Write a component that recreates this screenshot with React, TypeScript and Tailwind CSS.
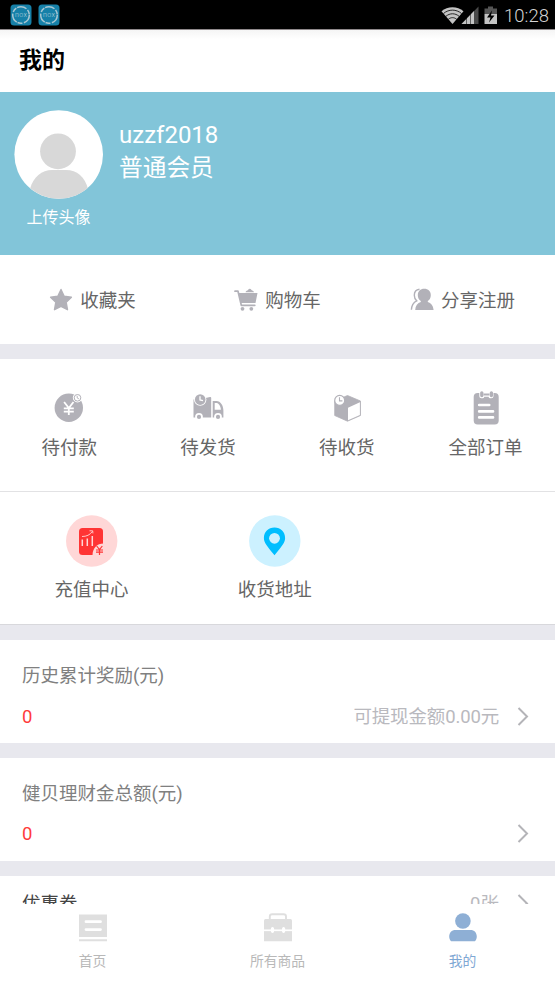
import type { ReactNode } from "react";
import clsx from "clsx";

function NoxIcon() {
    return (
        <svg width="22" height="22" viewBox="0 0 22 22">
            <rect x="0.5" y="0.5" width="21" height="21" rx="3.5" fill="#1680a8" />
            <circle cx="11" cy="11" r="8.3" fill="none" stroke="#a9c6d2" strokeWidth="1.5" strokeDasharray="10 1.5 5 0.9" />
            <text x="11" y="13.2" textAnchor="middle" fontSize="7" fontWeight="300" fill="#b9d3dd" textLength="12">
                nox
            </text>
        </svg>
    );
}

function StatusBar() {
    return (
        <div className="flex h-[29px] shrink-0 items-center bg-black pl-[10px] pr-[6px]">
            <div className="flex gap-[6px] pt-[1px]">
                <NoxIcon />
                <NoxIcon />
            </div>
            <div className="ml-auto flex items-center">
                <svg width="60" height="20" viewBox="0 0 60 20">
                    <path d="M11.5 19L0.5 6.3C6.5 .8 16.5 .8 22.5 6.3Z" fill="#c4c4c4" />
                    <path d="M2.500 8.500c5.200-4.500 12.800-4.500 18 0M4.800 11.400c4-3.500 9.400-3.500 13.400 0M7.300 14.300c2.600-2.200 5.800-2.200 8.400 0" fill="none" stroke="#000" strokeWidth=".8" />
                    <path d="M37.500 1.500V19H20.500Z" fill="#4a4a4a" />
                    <path d="M33 6V19H20.500Z" fill="#c4c4c4" />
                    <path d="M25.500 12v7M29.500 9v10" stroke="#000" strokeWidth=".5" />
                    <path d="M47 1.500h5v2h4V9H43.500V3.500H47z" fill="#555" />
                    <path d="M43.500 9H56v10H43.500z" fill="#c4c4c4" />
                    <path d="M51 5.500l-5 7h3.500l-1.500 5 5.500-7H50z" fill="#000" />
                </svg>
                <span className="ml-[3px] pt-[3px] text-[18.500px] font-light leading-[26px] text-[#d4d4d4]">10:28</span>
            </div>
        </div>
    );
}

function Avatar() {
    return (
        <svg width="89" height="89" viewBox="0 0 89 89">
            <defs>
                <clipPath id="avatar">
                    <circle cx="44.9" cy="44.500" r="44.300" />
                </clipPath>
            </defs>
            <circle cx="44.700" cy="44.500" r="44.300" fill="#fff" />
            <g clipPath="url(#avatar)" fill="#d8d8d8">
                <circle cx="44" cy="41.300" r="17.900" />
                <path d="M16 89V79C19 67 28 60 38 60H52C63 60 71 67 74 79V89z" />
            </g>
        </svg>
    );
}

function StarIcon() {
    return (
        <svg width="24" height="24" viewBox="0 0 24 24">
            <path d="M12 1.500l3.200 6.700 7.200 1-5.200 5.100 1.300 7.400-6.500-3.400-6.500 3.400 1.300-7.400-5.200-5.100 7.200-1z" fill="#b2b1b8" stroke="#b2b1b8" strokeWidth="1.400" strokeLinejoin="round" />
        </svg>
    );
}

function CartIcon() {
    return (
        <svg width="24" height="24" viewBox="0 0 24 24">
            <g fill="#b2b1b8">
                <path d="M4.500 5H23.500L21.500 15H7zM11.500 4.200c.5-1.500 1.800-1.500 2.500-2.200 1-1.600 2.500-1.600 3.500 0 .8.700 2 .7 2.500 2.200z" />
                <circle cx="8.500" cy="20.800" r="1.900" />
                <circle cx="17.300" cy="20.800" r="1.900" />
            </g>
            <path d="M1 3.200h3L7.300 17.300H20.800" fill="none" stroke="#b2b1b8" strokeWidth="1.700" strokeLinecap="round" strokeLinejoin="round" />
        </svg>
    );
}

function ShareIcon() {
    return (
        <svg width="24" height="24" viewBox="0 0 24 24">
            <path d="M14.200 .8c4 0 6.600 2.700 6.600 6.400 0 2.600-1.200 4.700-3 5.900v.9c3.200 1 5.500 3.800 5.800 8H5.200c.2-4.200 2.400-7 5.600-8v-.9c-1.800-1.200-3-3.300-3-5.900 0-3.700 2.600-6.400 6.400-6.400z" fill="#b2b1b8" />
            <path d="M9.500 1.300C6.200 1.700 4.300 4.200 4.300 7.200c0 2.400 1 4.300 2.400 5.600C3.600 14.300 1.600 17.500 1.400 21.800" fill="none" stroke="#b2b1b8" strokeWidth="1.400" />
        </svg>
    );
}

function PayIcon() {
    return (
        <svg width="32" height="32" viewBox="0 0 32 32">
            <circle cx="15.800" cy="15.800" r="14.200" fill="#b2b1b8" />
            <path d="M11.100 10l4.700 6 4.700-6M15.800 16v7M10.800 16.400h10M10.800 19.600h10" fill="none" stroke="#fff" strokeWidth="1.800" />
            <circle cx="24.500" cy="5.800" r="4.700" fill="#fff" />
            <circle cx="24.500" cy="5.800" r="3.300" fill="#fff" stroke="#b2b1b8" strokeWidth="1" />
            <path d="M24.200 3.800v2.200l1.700.8" fill="none" stroke="#b2b1b8" strokeWidth=".9" />
        </svg>
    );
}

function TruckIcon() {
    return (
        <svg width="32" height="32" viewBox="0 0 32 32">
            <path d="M1.500 7.500H7L18 5c.8 0 1.200.4 1.200 1V25.500H1.500zM20.700 9h3.800c4 0 6.900 4.500 6.900 9.500v7H20.700z" fill="#b2b1b8" />
            <path d="M22.700 11h2c2.300.4 4 3.500 4.200 6.800h-6.200z" fill="#fff" />
            <circle cx="7" cy="25" r="3.900" fill="#fff" />
            <circle cx="26" cy="25" r="3.900" fill="#fff" />
            <circle cx="7" cy="24.900" r="2.100" fill="#b2b1b8" />
            <circle cx="26" cy="24.900" r="2.100" fill="#b2b1b8" />
            <circle cx="8.200" cy="7.600" r="6.200" fill="#fff" />
            <circle cx="8.200" cy="7.600" r="5.300" fill="#b2b1b8" />
            <path d="M8 4.200V8l3 .6" fill="none" stroke="#fff" strokeWidth="1.300" />
        </svg>
    );
}

function BoxIcon() {
    return (
        <svg width="32" height="32" viewBox="0 0 32 32">
            <path d="M16.500 3.500L29.500 9V23.500L16.500 29.200 3.700 23.500V9z" fill="#b2b1b8" stroke="#b2b1b8" strokeWidth=".8" strokeLinejoin="round" />
            <path d="M17 15.700l11.900-5.500V23L17 28.300z" fill="#fff" />
            <circle cx="8.700" cy="8.400" r="5" fill="#fff" stroke="#b2b1b8" strokeWidth="1.200" />
            <path d="M8.500 5.300V8.900h2.900" fill="none" stroke="#b2b1b8" strokeWidth="1.100" />
        </svg>
    );
}

function OrdersIcon() {
    return (
        <svg width="32" height="36" viewBox="0 0 32 36">
            <rect x="3.700" y="3" width="25" height="31.500" rx="4" fill="#b2b1b8" />
            <path d="M9.300 1v5.200q0 2 2.200 2h1q1.500 0 1.800-1.500h4.200q.3 1.500 1.800 1.500h1q2.200 0 2.200-2V1z" fill="#fff" />
            <path d="M11.800 2.800V5.600M21.400 2.800V5.600" stroke="#b2b1b8" strokeWidth="3.300" strokeLinecap="round" />
            <path d="M13.500 4.500h6" stroke="#b2b1b8" strokeWidth="2" />
            <path d="M9.200 15h10M9.200 21.400H23M9.200 27.400H23" stroke="#fff" strokeWidth="2.700" strokeLinecap="round" />
        </svg>
    );
}

function RechargeIcon() {
    return (
        <svg width="52" height="52" viewBox="0 0 52 52">
            <circle cx="25.700" cy="26" r="25.700" fill="#ffd7d7" />
            <rect x="13" y="13" width="24" height="27" rx="3.500" fill="#ff3434" />
            <path d="M16.300 24.500v6.500M21.300 23.500v7.500M26.300 21v10" stroke="#ffd7d7" strokeWidth="1.500" />
            <path d="M16 21.500c4.500 0 8-1.500 10.300-5M23.500 15.800l3.200 0 .2 2.600" fill="none" stroke="#ffd7d7" strokeWidth=".9" />
            <path d="M26.500 40.500c0-7.500 4.500-12 11-12v12z" fill="#ffd7d7" />
            <path d="M30.700 31l2.800 3.500 2.800-3.500M33.500 34.500v5.500M30 35h7M30 37.200h7" fill="none" stroke="#ff3434" strokeWidth="1.200" />
        </svg>
    );
}

function AddressIcon() {
    return (
        <svg width="52" height="52" viewBox="0 0 52 52">
            <circle cx="25.800" cy="26" r="25.700" fill="#ccf1ff" />
            <path d="M25.500 12.500c6.200 0 10.600 4.600 10.600 10.400 0 4.600-2.900 7.800-10.600 17.300-7.700-9.500-10.600-12.700-10.600-17.300 0-5.800 4.400-10.400 10.600-10.400z" fill="#00beff" />
            <circle cx="25.500" cy="23.300" r="5.400" fill="#ccf1ff" />
        </svg>
    );
}

function Chevron() {
    return (
        <svg width="12" height="20" viewBox="0 0 12 20">
            <path d="M1.500 1L10 9.500l-8.500 8.500" fill="none" stroke="#b4b4b8" strokeWidth="2" />
        </svg>
    );
}

function HomeTabIcon() {
    return (
        <svg width="28" height="28" viewBox="0 0 28 28">
            <path d="M0 0.500h28v22.500H0zM0 25.300h28v1.900H0z" fill="#dfdfdf" />
            <path d="M7 7.700h14.500M7 15.600h14.500" stroke="#fff" strokeWidth="2.800" strokeLinecap="round" />
        </svg>
    );
}

function GoodsTabIcon() {
    return (
        <svg width="28" height="28" viewBox="0 0 28 28">
            <path d="M1.500 5h25q1.500 0 1.500 1.500v20.700H0V6.500Q0 5 1.500 5z" fill="#dfdfdf" />
            <path d="M5.800 5.500V2.500Q5.800 .2 8.300 .2h11.200Q22 .2 22 2.500v3" fill="none" stroke="#dfdfdf" strokeWidth="1.900" />
            <path d="M0 16.300h28" stroke="#fff" strokeWidth="1.700" />
            <ellipse cx="8.500" cy="16.100" rx="1.700" ry="3" fill="#fff" />
            <ellipse cx="19.600" cy="16.100" rx="1.700" ry="3" fill="#fff" />
        </svg>
    );
}

function MineTabIcon() {
    return (
        <svg width="28" height="28" viewBox="0 0 28 28">
            <circle cx="13.900" cy="7" r="7.800" fill="#8eafd5" />
            <path d="M6.500 15.900h15c3.800 0 6.300 2.700 6.300 6.500 0 2-.8 3.800-2 4.800H2.200c-1.200-1-2-2.800-2-4.800 0-3.800 2.500-6.500 6.300-6.500z" fill="#8eafd5" />
        </svg>
    );
}

const shortcuts = [
    { label: "收藏夹", icon: <StarIcon /> },
    { label: "购物车", icon: <CartIcon /> },
    { label: "分享注册", icon: <ShareIcon /> },
];

const orders = [
    { label: "待付款", icon: <PayIcon /> },
    { label: "待发货", icon: <TruckIcon /> },
    { label: "待收货", icon: <BoxIcon /> },
    { label: "全部订单", icon: <OrdersIcon /> },
];

const services = [
    { label: "充值中心", icon: <RechargeIcon /> },
    { label: "收货地址", icon: <AddressIcon /> },
];

const tabs = [
    { label: "首页", icon: <HomeTabIcon />, active: false },
    { label: "所有商品", icon: <GoodsTabIcon />, active: false },
    { label: "我的", icon: <MineTabIcon />, active: true },
];

function BalanceCard({ title, value, extra }: { title: string; value: string; extra?: ReactNode }) {
    return (
        <section className="h-[103px] bg-white pl-[22px] pr-[26px] pt-[22px] text-[18.500px] leading-[28px]">
            <div className="text-[#808080]">{title}</div>
            <div className="mt-[12px] flex items-center">
                <span className="text-[#ff3b3b]">{value}</span>
                <span className="ml-auto mr-[18px] pt-[1px] tracking-[-0.15px] text-[#b9b9be]">{extra}</span>
                <Chevron />
            </div>
        </section>
    );
}

export default function App() {
    return (
        <div className="flex h-[988px] w-[555px] flex-col overflow-hidden bg-white font-[Roboto,'Noto_Sans_CJK_SC',sans-serif]">
            <StatusBar />
            <header className="flex h-[63px] shrink-0 items-center border-t border-[#8f898b] bg-linear-to-b from-[#f5f5f5] to-white to-15% pl-[19px]">
                <h1 className="text-[23px] font-bold leading-[32px] text-black">我的</h1>
            </header>

            <main className="min-h-0 flex-1 overflow-hidden bg-[#e8e8ee]">
                <section className="flex h-[163px] bg-[#82c5d9] pl-[14px] pt-[18px] text-white">
                    <div className="flex w-[89px] flex-col items-center">
                        <Avatar />
                        <span className="mt-[7px] text-[16px] leading-[24px]">上传头像</span>
                    </div>
                    <div className="ml-[16px] pt-[9px] leading-[33px]">
                        <div className="text-[24px]">uzzf2018</div>
                        <div className="text-[23.700px]">普通会员</div>
                    </div>
                </section>

                <section className="grid h-[89px] grid-cols-3 bg-white">
                    {shortcuts.map((item) => (
                        <div key={item.label} className="flex items-center justify-center gap-[7px]">
                            {item.icon}
                            <span className="pt-[2px] text-[18.500px] leading-[28px] text-[#666]">{item.label}</span>
                        </div>
                    ))}
                </section>

                <section className="mt-[15px] grid h-[133px] grid-cols-4 border-b border-[#e2e2e4] bg-white pt-[30px]">
                    {orders.map((item) => (
                        <div key={item.label} className="flex flex-col items-center">
                            <div className="flex h-[37px] items-center">{item.icon}</div>
                            <span className="mt-[8px] text-[18.500px] leading-[28px] text-[#666]">{item.label}</span>
                        </div>
                    ))}
                </section>
                <section className="flex h-[133px] border-b border-[#d8d8dc] bg-white pt-[23px]">
                    {services.map((item) => (
                        <div key={item.label} className="flex w-[33%] flex-col items-center">
                            {item.icon}
                            <span className="mt-[9px] text-[18.500px] leading-[28px] text-[#666]">{item.label}</span>
                        </div>
                    ))}
                </section>

                <div className="mt-[15px] flex flex-col gap-[15px]">
                    <BalanceCard title="历史累计奖励(元)" value="0" extra="可提现金额0.00元" />
                    <BalanceCard title="健贝理财金总额(元)" value="0" />
                    <section className="flex h-[56px] items-center bg-white pl-[22px] pr-[26px] text-[18.500px] leading-[28px]">
                        <span className="text-[#444]">优惠券</span>
                        <span className="ml-auto mr-[18px] text-[#b9b9be]">0张</span>
                        <Chevron />
                    </section>
                </div>
            </main>

            <nav className="grid h-[84px] shrink-0 grid-cols-3 bg-white pt-[10px]">
                {tabs.map((tab) => (
                    <div
                        key={tab.label}
                        className={clsx("flex flex-col items-center", tab.active ? "text-[#7fa8d4]" : "text-[#b8b8b8]")}
                    >
                        <div className="h-[28px] [&>svg]:overflow-visible">{tab.icon}</div>
                        <span className="mt-[9px] text-[13.800px] leading-[20px]">{tab.label}</span>
                    </div>
                ))}
            </nav>
        </div>
    );
}
